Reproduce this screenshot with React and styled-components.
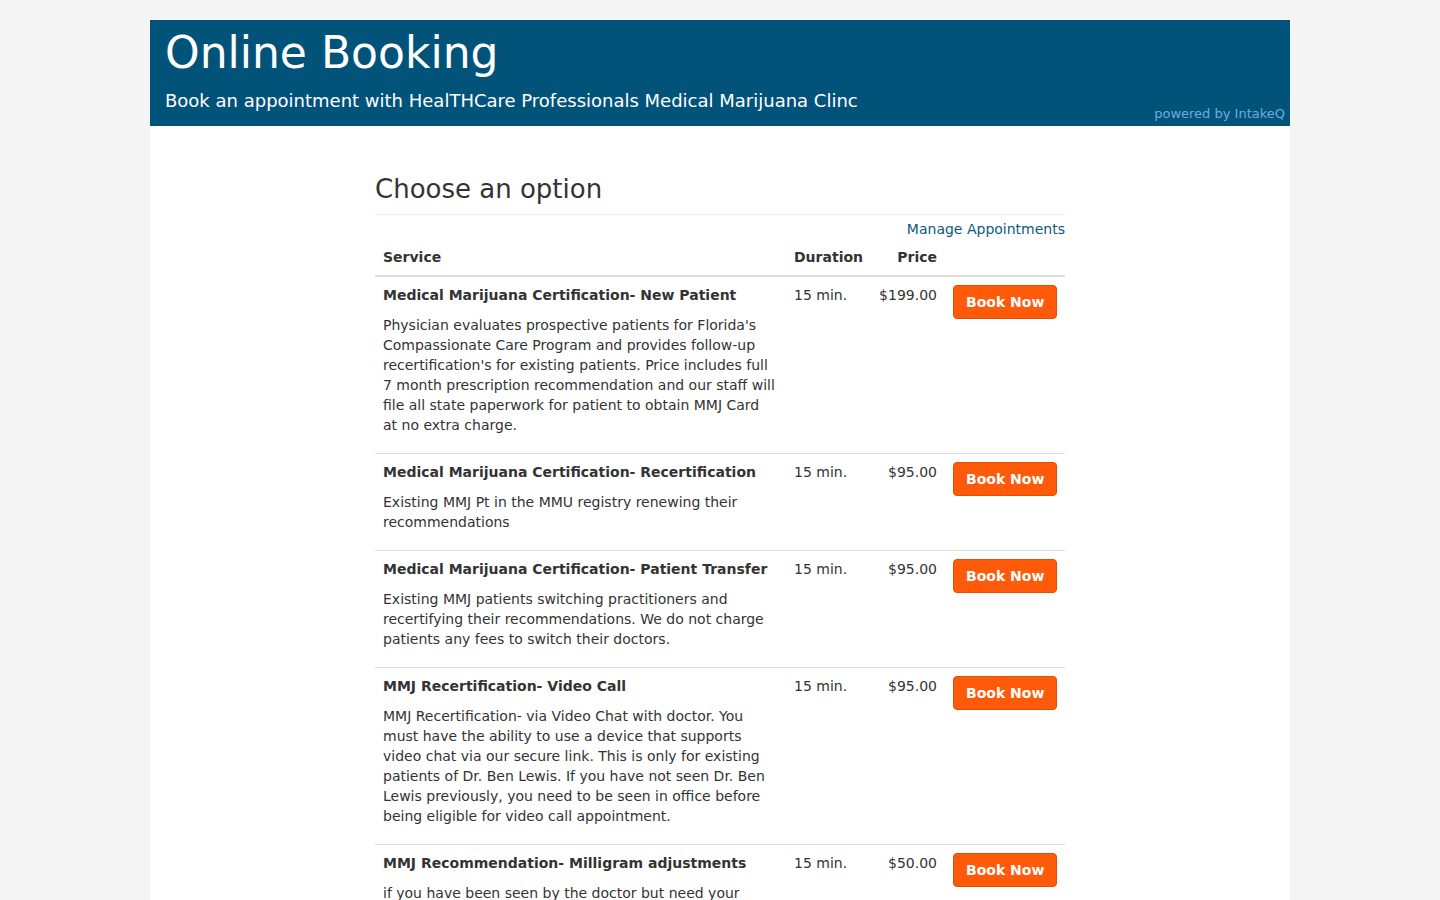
import React from "react";
import styled, { createGlobalStyle } from "styled-components";

const GlobalStyle = createGlobalStyle`
  html, body {
    margin: 0;
    padding: 0;
    background: #f4f4f4;
  }
  body {
    font-family: "DejaVu Sans", "Liberation Sans", sans-serif;
    font-size: 14px;
    line-height: 20px;
    color: #333;
  }
  * {
    box-sizing: border-box;
  }
`;

const services = [
  {
    id: 1,
    name: "Medical Marijuana Certification- New Patient",
    duration: "15 min.",
    price: "$199.00",
    description:
      "Physician evaluates prospective patients for Florida's Compassionate Care Program and provides follow-up recertification's for existing patients. Price includes full 7 month prescription recommendation and our staff will file all state paperwork for patient to obtain MMJ Card at no extra charge.",
  },
  {
    id: 2,
    name: "Medical Marijuana Certification- Recertification",
    duration: "15 min.",
    price: "$95.00",
    description:
      "Existing MMJ Pt in the MMU registry renewing their recommendations",
  },
  {
    id: 3,
    name: "Medical Marijuana Certification- Patient Transfer",
    duration: "15 min.",
    price: "$95.00",
    description:
      "Existing MMJ patients switching practitioners and recertifying their recommendations. We do not charge patients any fees to switch their doctors.",
  },
  {
    id: 4,
    name: "MMJ Recertification- Video Call",
    duration: "15 min.",
    price: "$95.00",
    description:
      "MMJ Recertification- via Video Chat with doctor. You must have the ability to use a device that supports video chat via our secure link. This is only for existing patients of Dr. Ben Lewis. If you have not seen Dr. Ben Lewis previously, you need to be seen in office before being eligible for video call appointment.",
  },
  {
    id: 5,
    name: "MMJ Recommendation- Milligram adjustments",
    duration: "15 min.",
    price: "$50.00",
    description:
      "if you have been seen by the doctor but need your milligrams adjusted on your current recommendation.",
  },
];

const App = () => {
  return (
    <>
      <GlobalStyle />
      <Page>
        <Header>
          <Title>Online Booking</Title>
          <HeaderRow>
            <Subtitle>
              Book an appointment with HealTHCare Professionals Medical
              Marijuana Clinc
            </Subtitle>
            <Powered href="#">powered by IntakeQ</Powered>
          </HeaderRow>
        </Header>
        <Panel>
          <Content>
            <Heading>Choose an option</Heading>
            <LinkRow>
              <ManageLink href="#">Manage Appointments</ManageLink>
            </LinkRow>
            <Table>
              <colgroup>
                <col style={{ width: "411px" }} />
                <col style={{ width: "84px" }} />
                <col style={{ width: "75px" }} />
                <col style={{ width: "120px" }} />
              </colgroup>
              <thead>
                <tr>
                  <Th>Service</Th>
                  <Th>Duration</Th>
                  <Th $align="right">Price</Th>
                  <Th />
                </tr>
              </thead>
              <tbody>
                {services.map((s) => (
                  <tr key={s.id}>
                    <Td>
                      <ServiceName>{s.name}</ServiceName>
                      <Description>{s.description}</Description>
                    </Td>
                    <Td>{s.duration}</Td>
                    <Td $align="right">{s.price}</Td>
                    <Td>
                      <BookButton type="button">Book Now</BookButton>
                    </Td>
                  </tr>
                ))}
              </tbody>
            </Table>
          </Content>
        </Panel>
      </Page>
    </>
  );
};

const Page = styled.div`
  width: 1140px;
  margin: 20px auto 0;
  min-height: 880px;
  display: flex;
  flex-direction: column;
`;

const Header = styled.header`
  background: #02537a;
  color: #fff;
  padding: 9px 5px 3px 15px;
`;

const Title = styled.h1`
  margin: 0;
  font-size: 44px;
  line-height: 48px;
  font-weight: normal;
`;

const HeaderRow = styled.div`
  display: flex;
  justify-content: space-between;
  align-items: flex-end;
  margin-top: 14px;
`;

const Subtitle = styled.div`
  font-size: 18px;
  line-height: 20px;
  margin-bottom: 12px;
`;

const Powered = styled.a`
  font-size: 13px;
  line-height: 18px;
  color: #6aaee0;
  text-decoration: none;
`;

const Panel = styled.main`
  flex: 1;
  background: #fff;
  padding-top: 48px;
`;

const Content = styled.div`
  width: 690px;
  margin: 0 auto;
`;

const Heading = styled.h2`
  margin: 0;
  font-size: 26px;
  line-height: 30px;
  font-weight: normal;
  padding-bottom: 10px;
  border-bottom: 1px solid #eee;
`;

const LinkRow = styled.div`
  margin-top: 4px;
  text-align: right;
`;

const ManageLink = styled.a`
  color: #0a5a80;
  text-decoration: none;
`;

const Table = styled.table`
  width: 100%;
  border-collapse: collapse;
  table-layout: fixed;
`;

const Th = styled.th`
  padding: 8px;
  text-align: ${({ $align }) => $align || "left"};
  font-weight: bold;
  border-bottom: 2px solid #ddd;
  vertical-align: bottom;
`;

const Td = styled.td`
  padding: 8px;
  text-align: ${({ $align }) => $align || "left"};
  vertical-align: top;
  border-top: 1px solid #ddd;
  tbody tr:first-child & {
    border-top: 0;
  }
`;

const ServiceName = styled.div`
  font-weight: bold;
`;

const Description = styled.p`
  margin: 10px 0;
  padding-right: 2px;
`;

const BookButton = styled.button`
  font-family: inherit;
  font-size: 14px;
  line-height: 20px;
  font-weight: bold;
  color: #fff;
  background: #ff5a0a;
  border: 1px solid #e34f00;
  border-radius: 4px;
  padding: 6px 12px;
  cursor: pointer;
  white-space: nowrap;
`;

export default App;
